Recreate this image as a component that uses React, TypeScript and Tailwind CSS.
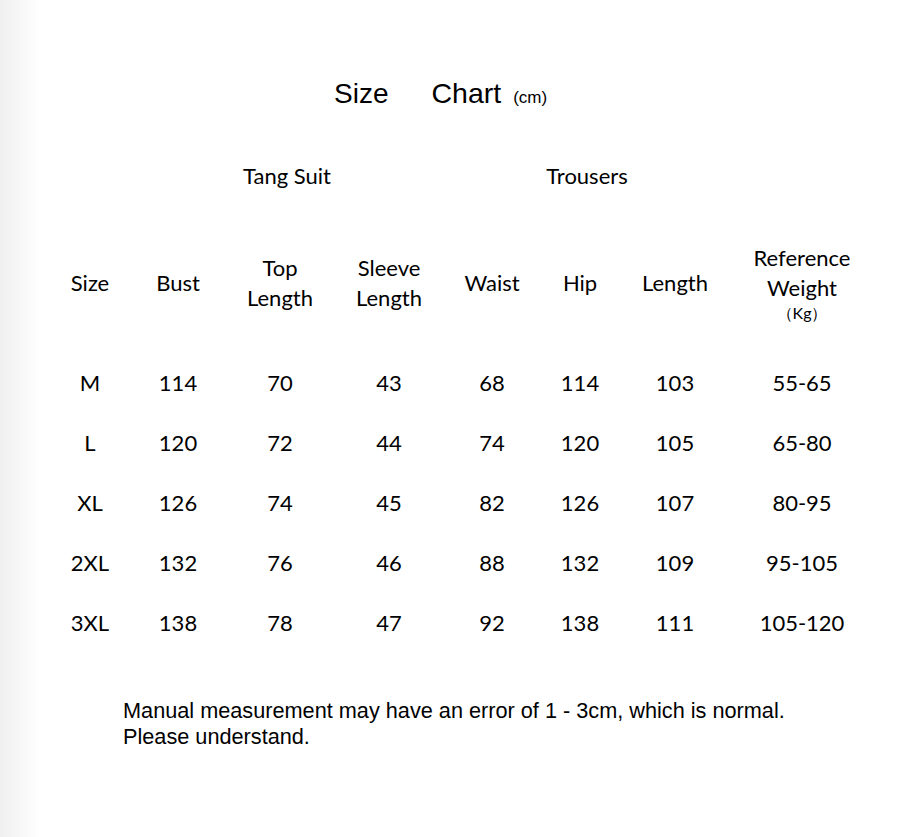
const rows = [
  ["M", "114", "70", "43", "68", "114", "103", "55-65"],
  ["L", "120", "72", "44", "74", "120", "105", "65-80"],
  ["XL", "126", "74", "45", "82", "126", "107", "80-95"],
  ["2XL", "132", "76", "46", "88", "132", "109", "95-105"],
  ["3XL", "138", "78", "47", "92", "138", "111", "105-120"],
];

const cols = "grid grid-cols-[88px_88px_116px_102px_104px_72px_118px_136px] ml-[46px]";

export default function App() {
  return (
    <div className="relative w-[918px] h-[837px] bg-white text-black overflow-hidden">
      {/* soft shade on the left edge */}
      <div className="absolute left-0 top-0 h-full w-[40px] bg-gradient-to-r from-[#f0f0f0] to-white" />
      <div className="relative pt-[74px]">
        <div className="flex items-baseline ml-[334px] h-[38px] leading-[38px] font-['Liberation_Sans',Arial,sans-serif]">
          <span className="text-[28px]">Size</span>
          <span className="text-[28.5px] ml-[43px]">Chart</span>
          <span className="text-[17px] ml-[12px]">(cm)</span>
        </div>

        <div className="font-['Lato',sans-serif] text-[22px]">
          <div className="flex mt-[49px] h-[30px] leading-[30px]">
            <div className="ml-[187px] w-[200px] text-center">Tang Suit</div>
            <div className="ml-[100px] w-[200px] text-center">Trousers</div>
          </div>

          <div className={`${cols} mt-[52px] items-center text-center leading-[30px]`}>
            <div>Size</div>
            <div>Bust</div>
            <div>
              Top
              <br />
              Length
            </div>
            <div>
              Sleeve
              <br />
              Length
            </div>
            <div>Waist</div>
            <div>Hip</div>
            <div>Length</div>
            <div>
              Reference
              <br />
              Weight
              <div className="text-[16px] leading-[20px]">（Kg）</div>
            </div>
          </div>

          <div className="mt-[29px]">
            {rows.map((r) => (
              <div key={r[0]} className={`${cols} h-[60px] items-center text-center`}>
                {r.map((c, i) => (
                  <div key={i}>{c}</div>
                ))}
              </div>
            ))}
          </div>
        </div>

        <div className="mt-[46px] ml-[123px] text-[21.7px] leading-[26px] font-['Liberation_Sans',Arial,sans-serif]">
          Manual measurement may have an error of 1 - 3cm, which is normal.
          <br />
          Please understand.
        </div>
      </div>
    </div>
  );
}
